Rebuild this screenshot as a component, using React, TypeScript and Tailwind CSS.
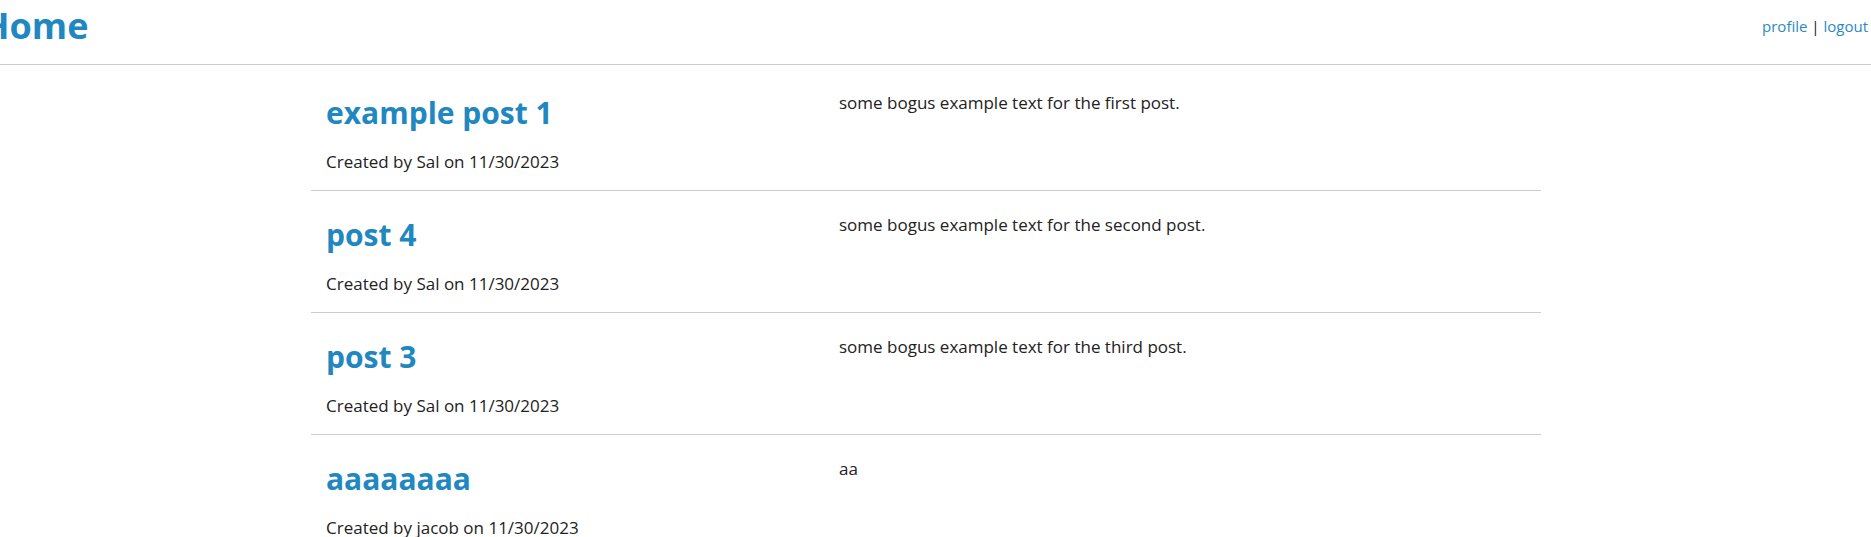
const posts = [
  {
    title: "example post 1",
    author: "Sal",
    date: "11/30/2023",
    body: "some bogus example text for the first post.",
  },
  {
    title: "post 4",
    author: "Sal",
    date: "11/30/2023",
    body: "some bogus example text for the second post.",
  },
  {
    title: "post 3",
    author: "Sal",
    date: "11/30/2023",
    body: "some bogus example text for the third post.",
  },
  {
    title: "aaaaaaaa",
    author: "jacob",
    date: "11/30/2023",
    body: "aa",
  },
];

export default function App() {
  return (
    <div className="min-h-screen bg-white font-['Open_Sans',sans-serif] text-[#222]">
      <header className="flex h-[65px] items-start justify-between overflow-hidden border-b border-[#cccccc]">
        <h1 className="-ml-[18px] mt-[2px] text-[36px] font-bold leading-[48px] text-[#2087c0]">
          Home
        </h1>
        <nav className="mr-[3px] mt-[14px] text-[15px] leading-[24px]">
          <a href="#" className="text-[#2a8ac4]">profile</a>
          <span className="text-[#111]"> | </span>
          <a href="#" className="text-[#2a8ac4]">logout</a>
        </nav>
      </header>

      <main className="ml-[311px] w-[1230px] pt-[4px]">
        {posts.map((post) => (
          <div key={post.title} className="flex h-[122px] border-b border-[#cccccc]">
            <div className="w-[516px] pl-[15px] pr-[12px] pt-[24px]">
              <h2 className="text-[30px] font-bold leading-[40px] text-[#2087c0]">
                {post.title}
              </h2>
              <p className="mt-[17px] text-[17px] leading-[24px]">
                Created by {post.author} on {post.date}
              </p>
            </div>
            <div className="flex-1 px-[12px] pt-[22px]">
              <p className="text-[17px] leading-[24px]">{post.body}</p>
            </div>
          </div>
        ))}
      </main>
    </div>
  );
}
